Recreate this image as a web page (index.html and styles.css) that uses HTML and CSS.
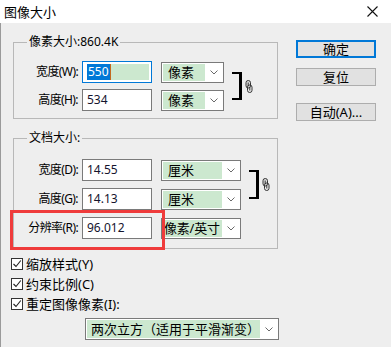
FILE: index.html
```html
<!DOCTYPE html>
<html lang="zh-CN">
<head>
    <meta charset="UTF-8">
    <title>图像大小</title>
    <link rel="stylesheet" href="styles.css">
</head>
<body>
<div class="window">
    <div class="titlebar">
        <span class="title">图像大小</span>
        <svg class="close" width="11" height="11" viewBox="0 0 11 11"><path d="M0.5 0.5 L10.5 10.5 M10.5 0.5 L0.5 10.5" stroke="#111" stroke-width="1.1" fill="none"/></svg>
    </div>

    <div class="content">
        <div class="main">
            <fieldset class="group">
                <legend>像素大小:860.4K</legend>
                <div class="grid grid-pixel">
                    <span class="lbl">宽度(W):</span>
                    <div class="field focused"><span class="sel">550</span><span class="caret"></span><span class="fill"></span></div>
                    <div class="drop"><span class="val">像素</span><span class="arrow"><svg width="8" height="5" viewBox="0 0 8 5"><path d="M0.5 0.5 L4 4 L7.5 0.5" stroke="#6a6a6a" fill="none"/></svg></span></div>
                    <div class="bracket"></div>
                    <div class="link"><svg width="8" height="13" viewBox="0 0 8 13"><rect x="1" y="0.5" width="4.5" height="7.5" rx="2.2" stroke="#333" fill="#ddd"/><rect x="2.5" y="5" width="4.5" height="7.5" rx="2.2" stroke="#333" fill="none"/><path d="M3.2 2.5 V6 M4.8 7 V10.5" stroke="#333"/></svg></div>

                    <span class="lbl">高度(H):</span>
                    <div class="field">534</div>
                    <div class="drop"><span class="val">像素</span><span class="arrow"><svg width="8" height="5" viewBox="0 0 8 5"><path d="M0.5 0.5 L4 4 L7.5 0.5" stroke="#6a6a6a" fill="none"/></svg></span></div>
                </div>
            </fieldset>

            <fieldset class="group group-doc">
                <legend>文档大小:</legend>
                <div class="grid grid-doc">
                    <span class="lbl">宽度(D):</span>
                    <div class="field">14.55</div>
                    <div class="drop"><span class="val">厘米</span><span class="arrow"><svg width="8" height="5" viewBox="0 0 8 5"><path d="M0.5 0.5 L4 4 L7.5 0.5" stroke="#6a6a6a" fill="none"/></svg></span></div>
                    <div class="bracket"></div>
                    <div class="link"><svg width="8" height="13" viewBox="0 0 8 13"><rect x="1" y="0.5" width="4.5" height="7.5" rx="2.2" stroke="#333" fill="#ddd"/><rect x="2.5" y="5" width="4.5" height="7.5" rx="2.2" stroke="#333" fill="none"/><path d="M3.2 2.5 V6 M4.8 7 V10.5" stroke="#333"/></svg></div>

                    <span class="lbl">高度(G):</span>
                    <div class="field">14.13</div>
                    <div class="drop"><span class="val">厘米</span><span class="arrow"><svg width="8" height="5" viewBox="0 0 8 5"><path d="M0.5 0.5 L4 4 L7.5 0.5" stroke="#6a6a6a" fill="none"/></svg></span></div>

                    <span class="lbl">分辨率(R):</span>
                    <div class="field">96.012</div>
                    <div class="drop"><span class="val tight">像素/英寸</span><span class="arrow"><svg width="8" height="5" viewBox="0 0 8 5"><path d="M0.5 0.5 L4 4 L7.5 0.5" stroke="#6a6a6a" fill="none"/></svg></span></div>
                </div>
            </fieldset>

            <div class="checks">
                <div class="check"><span class="box"><svg width="10" height="10" viewBox="0 0 10 10"><path d="M1.5 5 L4 7.5 L8.8 1.5" stroke="#222" stroke-width="1.1" fill="none"/></svg></span>缩放样式(Y)</div>
                <div class="check"><span class="box"><svg width="10" height="10" viewBox="0 0 10 10"><path d="M1.5 5 L4 7.5 L8.8 1.5" stroke="#222" stroke-width="1.1" fill="none"/></svg></span>约束比例(C)</div>
                <div class="check"><span class="box"><svg width="10" height="10" viewBox="0 0 10 10"><path d="M1.5 5 L4 7.5 L8.8 1.5" stroke="#222" stroke-width="1.1" fill="none"/></svg></span>重定图像像素(I):</div>
            </div>

            <div class="drop resample"><span class="val">两次立方（适用于平滑渐变）</span><span class="arrow"><svg width="8" height="5" viewBox="0 0 8 5"><path d="M0.5 0.5 L4 4 L7.5 0.5" stroke="#6a6a6a" fill="none"/></svg></span></div>
        </div>

        <div class="buttons">
            <div class="btn default">确定</div>
            <div class="btn">复位</div>
            <div class="btn auto">自动(A)...</div>
        </div>
    </div>

    <div class="highlight"></div>
</div>
</body>
</html>
```

FILE: styles.css
```css
body {
    margin: 0;
    background-color: #eeeeee;
    font-family: "Noto Sans", "Noto Sans CJK SC", sans-serif;
    font-size: 12px;
    color: #000;
}

.window {
    position: relative;
    height: 347px;
    overflow: hidden;
}

.titlebar {
    height: 23px;
    background-color: #ffffff;
    display: flex;
    align-items: center;
    justify-content: space-between;
    padding: 0 13px 0 4px;
}

.title {
    font-size: 13px;
    line-height: 16px;
}

.content {
    display: flex;
    border-left: 1px solid #9a9a9a;
    padding: 11px 0 0 12px;
    height: 324px;
    box-sizing: border-box;
}

.main {
    width: 265px;
}

.group {
    margin: 0;
    padding: 11px 0 7px 0;
    border: 1px solid #b8b8b8;
    width: 265px;
    min-width: 0;
    box-sizing: border-box;
}

.group legend {
    margin-left: 13px;
    padding: 0 2px;
    line-height: 16px;
}

.group-doc {
    margin-top: 11px;
    padding: 13px 0 9px 0;
}

.grid {
    display: grid;
    grid-auto-rows: 22px;
    row-gap: 6px;
    grid-template-columns: 68px 70px 72px 18px 11px;
    align-items: center;
}

.grid-doc {
    row-gap: 7px;
    grid-template-columns: 68px 70px 89px 18px 11px;
}

.lbl {
    grid-column: 1;
    text-align: right;
    padding-right: 4px;
    line-height: 16px;
    letter-spacing: -0.6px;
    white-space: nowrap;
}

.field {
    grid-column: 2;
    height: 22px;
    box-sizing: border-box;
    border: 1px solid #7a7a7a;
    background-color: #ffffff;
    padding: 0 4px;
    display: flex;
    align-items: center;
    line-height: 16px;
    color: #14142e;
}

.field.focused {
    border-color: #0078d7;
    padding: 2px 2px 2px 4px;
    align-items: stretch;
}

.sel {
    background-color: #0078d7;
    color: #ffffff;
    padding: 0 1px;
    display: flex;
    align-items: center;
}

.caret {
    width: 1px;
    background-color: #c46a1e;
}

.fill {
    flex: 1;
    background-color: #cce8cf;
}

.drop {
    grid-column: 3;
    margin-left: 9px;
    height: 21px;
    box-sizing: border-box;
    border: 1px solid #7a7a7a;
    background-color: #ffffff;
    display: flex;
    padding: 1px;
    font-size: 13px;
}

.drop .val {
    flex: 1;
    background-color: #cce8cf;
    padding-left: 5px;
    line-height: 17px;
    white-space: nowrap;
}

.drop .val.tight {
    padding-left: 1px;
    letter-spacing: -0.2px;
}

.drop .arrow {
    width: 17px;
    flex: none;
    display: flex;
    align-items: center;
    justify-content: center;
}

.bracket {
    grid-column: 4;
    grid-row: 1 / span 2;
    align-self: stretch;
    margin: 11px 0 11px 8px;
    border: 2px solid #000;
    border-left: none;
    border-right-width: 3px;
}

.link {
    grid-column: 5;
    grid-row: 1 / span 2;
    margin-left: 3px;
    display: flex;
    align-items: center;
}

.checks {
    margin-top: 5px;
    margin-left: -2px;
}

.check {
    height: 20px;
    display: flex;
    align-items: center;
    gap: 3px;
    font-size: 13px;
    line-height: 16px;
}

.check .box {
    width: 12px;
    height: 12px;
    box-sizing: border-box;
    border: 1px solid #333;
    background-color: #ffffff;
    display: flex;
    align-items: center;
    justify-content: center;
}

.resample {
    margin: 4px 0 0 72px;
    width: 194px;
    height: 22px;
}

.resample .val {
    padding-left: 4px;
    line-height: 18px;
}

.resample .arrow {
    width: 18px;
}

.buttons {
    margin-left: 18px;
    padding-top: 6px;
    display: flex;
    flex-direction: column;
}

.btn {
    width: 80px;
    height: 18px;
    box-sizing: border-box;
    border: 1px solid #adadad;
    background-color: #e1e1e1;
    font-size: 13px;
    line-height: 16px;
    text-align: center;
    margin-bottom: 10px;
}

.btn.default {
    border: 2px solid #0078d7;
    line-height: 14px;
}

.btn.auto {
    margin-top: 7px;
}

.highlight {
    position: absolute;
    left: 10px;
    top: 210px;
    width: 155px;
    height: 40px;
    box-sizing: border-box;
    border: 3px solid #ef3b3b;
}
```
